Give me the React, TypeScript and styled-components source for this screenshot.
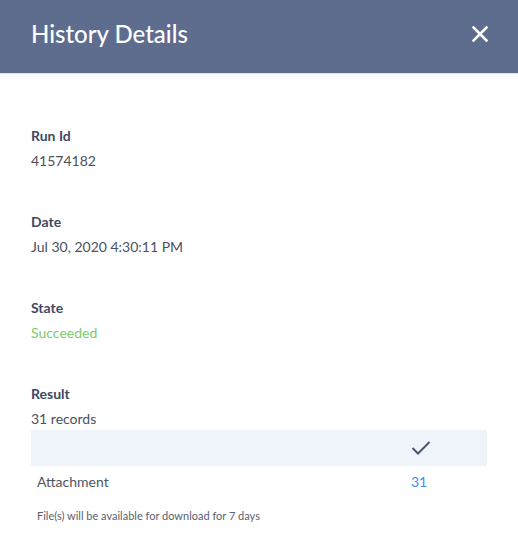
import React from 'react';
import styled, {createGlobalStyle} from 'styled-components';

const GlobalStyle = createGlobalStyle`
    body {
        margin: 0;
        background: #fff;
        font-family: Lato, "Open Sans", sans-serif;
    }
`

const Panel = styled.div`
    width: 518px;
    min-height: 541px;
    background: #fff;
`

const Header = styled.header`
    height: 74px;
    box-sizing: border-box;
    background: #5e6d8e;
    border-bottom: 1px solid #dfe2e8;
    display: flex;
    align-items: center;
    justify-content: space-between;
    padding: 0 30px 6px 31px;
`

const Title = styled.h1`
    margin: 0;
    color: #fff;
    font-size: 24px;
    font-weight: 500;
`

const CloseButton = styled.button`
    border: none;
    background: none;
    padding: 0;
    width: 16px;
    height: 16px;
    display: flex;
    cursor: pointer;
`

const Content = styled.div`
    padding: 52px 31px 0 31px;
    display: flex;
    flex-direction: column;
    gap: 41px;
`

const Field = styled.div`
    display: flex;
    flex-direction: column;
    gap: 5px;
`

const Label = styled.div`
    font-size: 14px;
    line-height: 20px;
    font-weight: 700;
    color: #3e4a64;
`

const Value = styled.div<{tone?: string}>`
    font-size: 14px;
    line-height: 20px;
    color: ${props => props.tone === 'success' ? '#7ccb6b' : '#4c5161'};
`

const Table = styled.div`
    margin-top: -4px;
    display: grid;
    grid-template-columns: 1fr 76px;
`

const HeadCell = styled.div`
    height: 36px;
    background: #eff3fa;
    display: flex;
    align-items: center;
`

const Cell = styled.div<{link?: boolean}>`
    height: 30px;
    display: flex;
    align-items: center;
    font-size: 14px;
    color: ${props => props.link ? '#3b8cf2' : '#50555f'};
    padding-left: ${props => props.link ? '0' : '6px'};
`

const Note = styled.div`
    margin-top: 8px;
    padding-left: 6px;
    font-size: 11px;
    color: #5b6070;
`

const App = () => {
    return (
        <>
            <GlobalStyle />
            <Panel>
                <Header>
                    <Title>History Details</Title>
                    <CloseButton aria-label="Close">
                        <svg width="16" height="16" viewBox="0 0 16 16">
                            <path d="M1.5 1.5 L14.5 14.5 M14.5 1.5 L1.5 14.5" stroke="#fff" strokeWidth="2.6" strokeLinecap="square" />
                        </svg>
                    </CloseButton>
                </Header>
                <Content>
                    <Field>
                        <Label>Run Id</Label>
                        <Value>41574182</Value>
                    </Field>
                    <Field>
                        <Label>Date</Label>
                        <Value>Jul 30, 2020 4:30:11 PM</Value>
                    </Field>
                    <Field>
                        <Label>State</Label>
                        <Value tone="success">Succeeded</Value>
                    </Field>
                    <Field>
                        <Label>Result</Label>
                        <Value>31 records</Value>
                        <Table>
                            <HeadCell />
                            <HeadCell>
                                <svg width="20" height="16" viewBox="0 0 20 16">
                                    <path d="M1.5 8 L7 13.5 L18.5 2" stroke="#4a5670" strokeWidth="2" fill="none" />
                                </svg>
                            </HeadCell>
                            <Cell>Attachment</Cell>
                            <Cell link>31</Cell>
                        </Table>
                        <Note>File(s) will be available for download for 7 days</Note>
                    </Field>
                </Content>
            </Panel>
        </>
    );
};

export default App;
